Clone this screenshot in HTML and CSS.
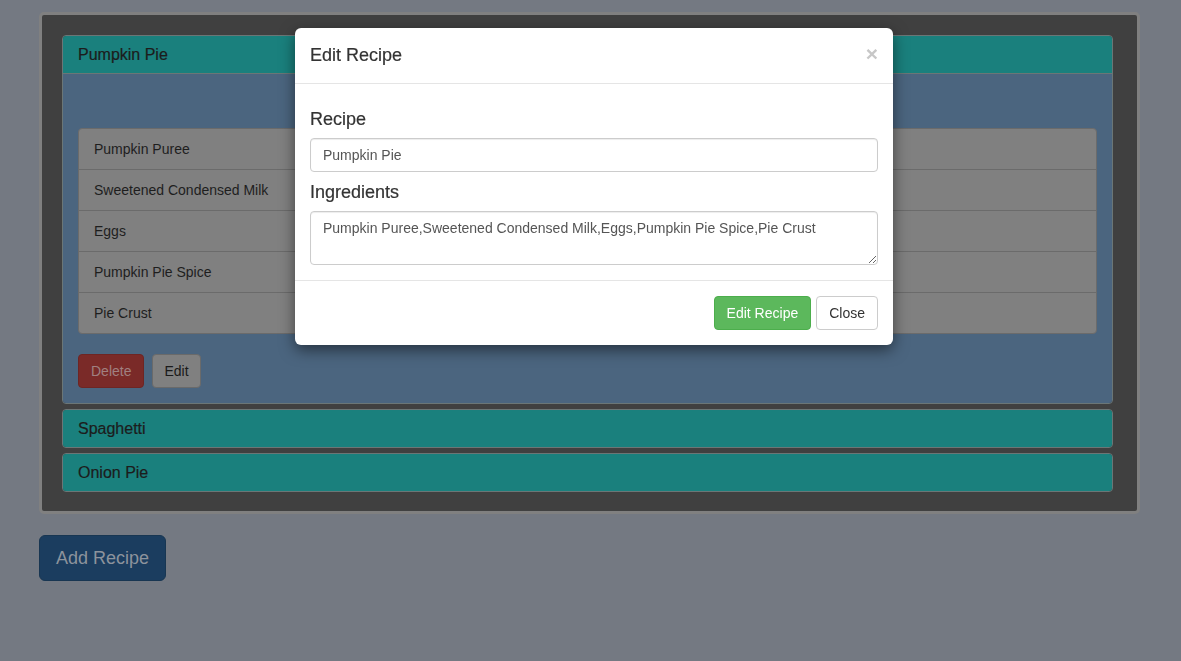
FILE: index.html
```html
<!DOCTYPE html>
<html lang="en">
<head>
<meta charset="utf-8">
<title>Recipe Box</title>
<link rel="stylesheet" href="styles.css">
</head>
<body>
<div class="app">
  <div class="well">
    <div class="panel panel-open">
      <div class="panel-heading"><h4 class="panel-title">Pumpkin Pie</h4></div>
      <div class="panel-body">
        <div class="spacer"></div>
        <ul class="list-group">
          <li class="list-item">Pumpkin Puree</li>
          <li class="list-item">Sweetened Condensed Milk</li>
          <li class="list-item">Eggs</li>
          <li class="list-item">Pumpkin Pie Spice</li>
          <li class="list-item">Pie Crust</li>
        </ul>
        <div class="actions">
          <button class="btn btn-danger">Delete</button>
          <button class="btn btn-default-dim">Edit</button>
        </div>
      </div>
    </div>
    <div class="panel">
      <div class="panel-heading"><h4 class="panel-title">Spaghetti</h4></div>
    </div>
    <div class="panel">
      <div class="panel-heading"><h4 class="panel-title">Onion Pie</h4></div>
    </div>
  </div>
  <button class="btn btn-lg btn-primary-dim">Add Recipe</button>
</div>

<div class="modal">
  <div class="modal-dialog">
    <div class="modal-header">
      <button class="close" aria-label="Close">&times;</button>
      <h4 class="modal-title">Edit Recipe</h4>
    </div>
    <div class="modal-body">
      <h4 class="field-label field-first">Recipe</h4>
      <input class="form-control" type="text" value="Pumpkin Pie">
      <h4 class="field-label">Ingredients</h4>
      <textarea class="form-control textarea" rows="2">Pumpkin Puree,Sweetened Condensed Milk,Eggs,Pumpkin Pie Spice,Pie Crust</textarea>
    </div>
    <div class="modal-footer">
      <button class="btn btn-success">Edit Recipe</button>
      <button class="btn btn-default">Close</button>
    </div>
  </div>
</div>
</body>
</html>
```
FILE: styles.css
```css
* { box-sizing: border-box; }

html, body {
  margin: 0;
  padding: 0;
  height: 100%;
}

body {
  background: #747982;
  font-family: "Liberation Sans", Arial, Helvetica, sans-serif;
  font-size: 14px;
  line-height: 1.42857;
  color: #333;
}

.app {
  padding: 12px 0 0 39px;
}

.well {
  width: 1101px;
  background: #404040;
  border: 3px solid #808080;
  border-radius: 5px;
  padding: 20px 24px 19px 20px;
  display: flex;
  flex-direction: column;
  gap: 5px;
}

.panel {
  border: 1px solid #6b7676;
  border-radius: 4px;
  overflow: hidden;
}

.panel-heading {
  background: #1a807d;
  padding: 10px 15px;
}

.panel-open .panel-heading {
  border-bottom: 1px solid #6b7676;
}

.panel-title {
  margin: 0;
  font-size: 16px;
  font-weight: normal;
  line-height: 17px;
  color: #1c1c1c;
  -webkit-text-stroke: 0.2px #1c1c1c;
}

.panel-body {
  background: #4b657f;
  padding: 15px;
}

.spacer {
  height: 39px;
}

.list-group {
  list-style: none;
  margin: 0 0 20px;
  padding: 0;
}

.list-item {
  background: #808080;
  border: 1px solid #6b6b6b;
  margin-bottom: -1px;
  padding: 10px 15px;
  line-height: 20px;
  color: #1e1e1e;
}

.list-item:first-child { border-radius: 4px 4px 0 0; }
.list-item:last-child { border-radius: 0 0 4px 4px; margin-bottom: 0; }

.actions {
  display: flex;
  gap: 8px;
}

.btn {
  font-family: inherit;
  font-size: 14px;
  line-height: 20px;
  padding: 6px 12px;
  border: 1px solid transparent;
  border-radius: 4px;
  cursor: pointer;
}

.btn-danger {
  background: #7a2a28;
  border-color: #6e2523;
  color: #a08080;
}

.btn-default-dim {
  background: #808080;
  border-color: #6a6a6a;
  color: #1a1a1a;
  padding: 6px 11px;
}

.btn-lg {
  font-size: 18px;
  line-height: 24px;
  padding: 10px 16px;
  border-radius: 6px;
}

.btn-primary-dim {
  margin-top: 21px;
  background: #1b3d5f;
  border-color: #183652;
  color: #8c939c;
}

.modal {
  position: fixed;
  inset: 0;
}

.modal-dialog {
  position: absolute;
  top: 28px;
  left: 295px;
  width: 598px;
  background: #fff;
  border-radius: 6px;
  box-shadow: 0 5px 15px rgba(0, 0, 0, 0.5);
}

.modal-header {
  padding: 15px;
  border-bottom: 1px solid #e5e5e5;
  display: flex;
  flex-direction: row-reverse;
  justify-content: space-between;
  align-items: center;
}

.modal-title {
  margin: 0;
  font-size: 18px;
  font-weight: normal;
  line-height: 25px;
  color: #333;
  -webkit-text-stroke: 0.2px #333;
}

.close {
  background: none;
  border: 0;
  padding: 0;
  font-family: inherit;
  font-size: 21px;
  font-weight: bold;
  line-height: 1;
  color: #c7c7c7;
  margin-top: -5px;
  margin-right: 0;
}

.modal-body {
  padding: 15px;
}

.field-label {
  margin: 10px 0 9px;
  font-size: 18px;
  font-weight: normal;
  line-height: 20px;
  color: #333;
  -webkit-text-stroke: 0.2px #333;
}

.field-first {
  margin: 10px 0 9px;
}

.form-control {
  display: block;
  width: 100%;
  height: 34px;
  padding: 6px 12px;
  font-family: inherit;
  font-size: 14px;
  line-height: 20px;
  color: #555;
  background: #fff;
  border: 1px solid #ccc;
  border-radius: 4px;
  box-shadow: inset 0 1px 1px rgba(0, 0, 0, 0.075);
}

.textarea {
  height: 54px;
  resize: vertical;
}

.modal-footer {
  padding: 15px;
  border-top: 1px solid #e5e5e5;
  display: flex;
  justify-content: flex-end;
  gap: 5px;
}

.btn-success {
  background: #5cb85c;
  border-color: #4cae4c;
  color: #fff;
}

.btn-default {
  background: #fff;
  border-color: #ccc;
  color: #333;
}
```
